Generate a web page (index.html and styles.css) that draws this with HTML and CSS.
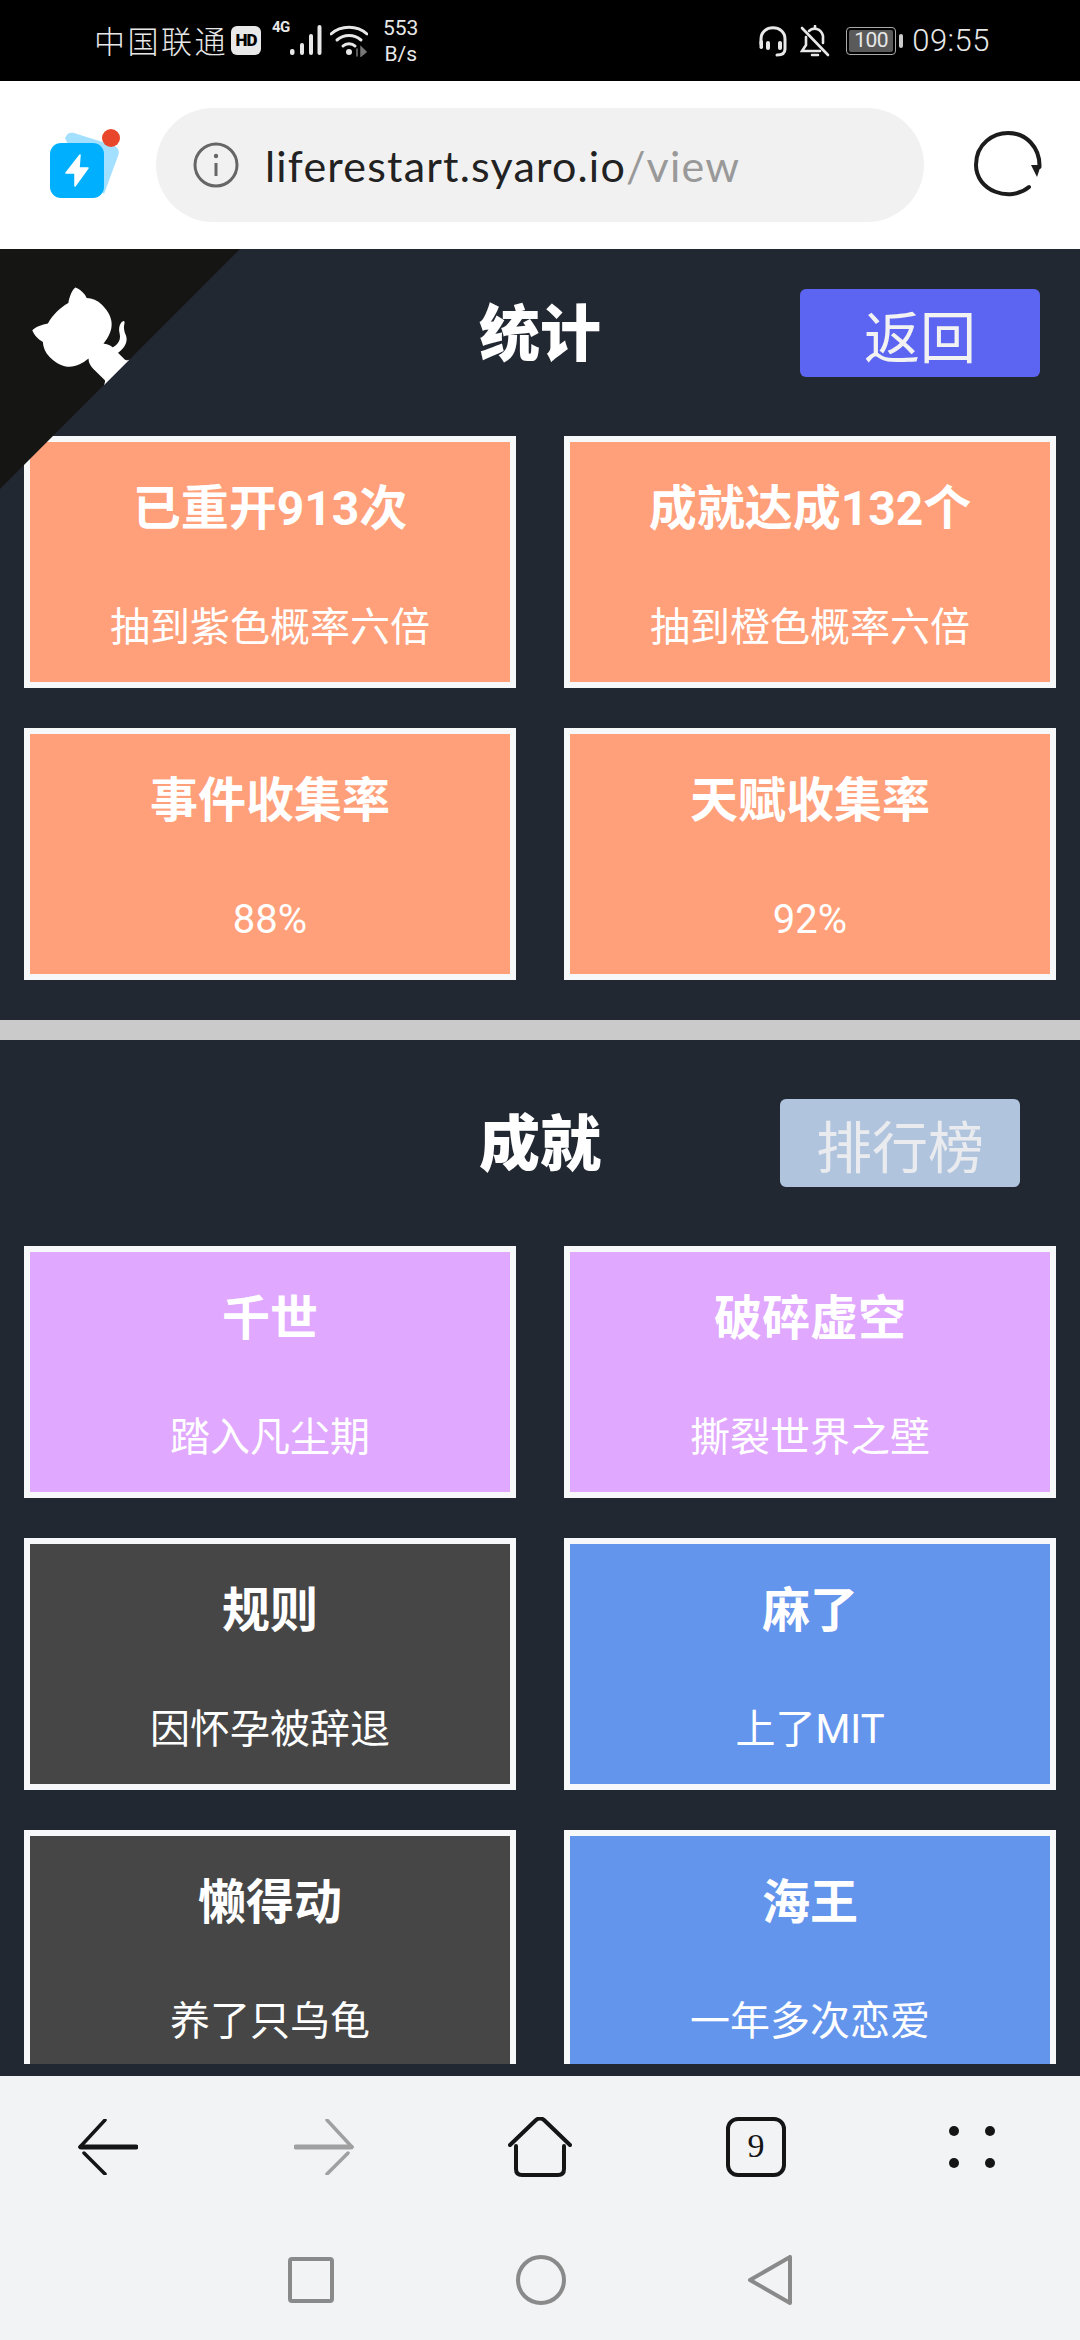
FILE: index.html
```html
<!DOCTYPE html>
<html lang="zh-CN">
<head>
    <meta charset="UTF-8">
    <meta name="viewport" content="width=device-width, initial-scale=1.0">
    <title>统计</title>
    <link rel="stylesheet" href="styles.css">
</head>
<body>
    <div class="phone">
        <div class="status-bar">
            <span class="carrier">中国联通</span>
            <span class="hd-badge">HD</span>
            <span class="net-type">4G</span>
            <svg class="signal" width="32" height="30" viewBox="0 0 32 30" fill="#e8e8e8">
                <rect x="0" y="24" width="4.500" height="6" rx="2"/>
                <rect x="10" y="18" width="4" height="12" rx="2"/>
                <rect x="19" y="9" width="4" height="21" rx="2"/>
                <rect x="27.500" y="0" width="4" height="30" rx="2"/>
            </svg>
            <svg class="wifi" width="38" height="32" viewBox="0 0 38 32" fill="none" stroke="#e8e8e8" stroke-width="3" stroke-linecap="round">
                <path d="M1 9 C11 0 27 0 37 9"/>
                <path d="M7 15 C14 9 24 9 31 15"/>
                <path d="M13 21 C16 18 22 18 25 21"/>
                <circle cx="19" cy="27" r="3" fill="#e8e8e8" stroke="none"/>
                <path d="M27 24 v7 M31 22 l5 5 l-5 4 z" stroke-width="1.5" stroke="#777" fill="#777"/>
            </svg>
            <div class="net-speed"><span>553</span><span>B/s</span></div>
            <div class="status-right">
                <svg width="30" height="32" viewBox="0 0 30 32" fill="none" stroke="#e8e8e8" stroke-width="3" stroke-linecap="round">
                    <path d="M3 19 V14 C3 -1 27 -1 27 14 V24 C27 28 24 30 19 30"/>
                    <rect x="1.5" y="15" width="3.5" height="9" rx="1.7" fill="#e8e8e8" stroke="none"/>
                    <rect x="8" y="16" width="4" height="9" rx="2" fill="#e8e8e8" stroke="none"/>
                    <rect x="20" y="16" width="4" height="9" rx="2" fill="#e8e8e8" stroke="none"/>
                </svg>
                <svg class="bell" width="30" height="32" viewBox="0 0 30 32" fill="none" stroke="#e8e8e8" stroke-width="2.6" stroke-linecap="round">
                    <path d="M6 12 V20 L2 26 H20"/>
                    <path d="M9 6 C13 2 21 3 23 11 V18"/>
                    <path d="M15 3 V1 M12 30 H18"/>
                    <path d="M2 3 L28 30"/>
                </svg>
                <div class="battery"><span class="battery-level">100</span></div>
                <span class="battery-nub"></span>
                <span class="clock">09:55</span>
            </div>
        </div>

        <div class="toolbar">
            <svg class="app-logo" width="62" height="66" viewBox="0 0 62 66">
                <path d="M15 6 C17 1 20 0 24 1 L62 13 C68 15 70 18 68 24 L54 62 L30 40 Z" fill="#a3e0ff"/>
                <rect x="0" y="11" width="54" height="55" rx="11" fill="#00b0ff"/>
                <path d="M30 23 L16 41 H25 L25 54 L38 36 H29 Z" fill="#fff" stroke="#fff" stroke-width="1.500" stroke-linejoin="round"/>
                <circle cx="61" cy="6" r="9" fill="#e8472b"/>
            </svg>
            <div class="address-bar">
                <svg width="46" height="46" viewBox="0 0 46 46" fill="none" stroke="#666" stroke-width="3">
                    <circle cx="23" cy="23" r="21"/>
                    <path d="M23 21 V34"/>
                    <circle cx="23" cy="14" r="2.2" fill="#666" stroke="none"/>
                </svg>
                <span class="url">liferestart.syaro.io<span class="url-path">/view</span></span>
            </div>
            <svg class="reload" width="68" height="68" viewBox="0 0 68 68" fill="none" stroke="#1c1c1c" stroke-width="4" stroke-linecap="round">
                <path d="M55 56 C36 72 2 60 2 34 C2 12 20 2 34 2 C52 2 66 16 65.500 36"/>
                <path d="M57 34 H67 L63 46 Z" fill="#1c1c1c" stroke="none"/>
            </svg>
        </div>

        <div class="main">
            <a class="github-corner">
                <svg width="240" height="240" viewBox="0 0 250 250">
                    <path d="M0,0 L115,115 L130,115 L142,142 L250,250 L250,0 Z" fill="#151513"/>
                    <path d="M128.3,109.0 C113.8,99.7 119.0,89.6 119.0,89.6 C122.0,82.7 120.5,78.6 120.5,78.6 C119.2,72.0 123.4,76.3 123.4,76.3 C127.3,80.9 125.5,87.3 125.5,87.3 C122.9,97.6 130.6,101.9 134.4,103.2" fill="#fff"/>
                    <path d="M115.0,115.0 C114.9,115.1 118.7,116.5 119.8,115.4 L133.7,101.6 C136.9,99.2 139.9,98.4 142.2,98.6 C133.8,88.0 127.5,74.4 143.8,58.0 C148.5,53.4 154.0,51.2 159.7,51.0 C160.3,49.4 163.2,43.6 171.4,40.1 C171.4,40.1 176.1,42.5 178.8,56.2 C183.1,58.6 187.2,61.8 190.9,65.4 C194.5,69.0 197.7,73.2 200.1,77.6 C213.8,80.2 216.3,84.9 216.3,84.9 C212.7,93.1 206.9,96.0 205.4,96.6 C205.1,102.4 203.0,107.8 198.3,112.5 C181.9,128.9 168.3,122.5 157.7,114.1 C157.9,116.9 156.7,120.9 152.7,124.9 L141.0,136.5 C139.8,137.7 141.6,141.9 141.8,141.8 Z" fill="#fff"/>
                </svg>
            </a>
            <div class="scroller">
                <section class="section section-stats">
                    <div class="section-head">
                        <h1>统计</h1>
                        <button class="btn btn-back">返回</button>
                    </div>
                    <div class="cards">
                        <div class="card orange"><h2>已重开913次</h2><p>抽到紫色概率六倍</p></div>
                        <div class="card orange"><h2>成就达成132个</h2><p>抽到橙色概率六倍</p></div>
                        <div class="card orange"><h2>事件收集率</h2><p>88%</p></div>
                        <div class="card orange"><h2>天赋收集率</h2><p>92%</p></div>
                    </div>
                </section>
                <div class="divider"></div>
                <section class="section section-achieve">
                    <div class="section-head">
                        <h1>成就</h1>
                        <button class="btn btn-rank">排行榜</button>
                    </div>
                    <div class="cards">
                        <div class="card purple"><h2>千世</h2><p>踏入凡尘期</p></div>
                        <div class="card purple"><h2>破碎虚空</h2><p>撕裂世界之壁</p></div>
                        <div class="card grey"><h2>规则</h2><p>因怀孕被辞退</p></div>
                        <div class="card blue"><h2>麻了</h2><p>上了MIT</p></div>
                        <div class="card grey"><h2>懒得动</h2><p>养了只乌龟</p></div>
                        <div class="card blue"><h2>海王</h2><p>一年多次恋爱</p></div>
                    </div>
                </section>
            </div>
        </div>

        <div class="bottom-nav">
            <div class="browser-nav">
                <svg width="60" height="56" viewBox="0 0 60 56" fill="none" stroke="#151515" stroke-linecap="round">
                    <path d="M27 1 L2 28" stroke-width="3.500"/>
                    <path d="M3 28 H58" stroke-width="5"/>
                    <path d="M6 34 L27 55" stroke-width="3.500"/>
                </svg>
                <svg width="60" height="56" viewBox="0 0 60 56" fill="none" stroke="#a0a0a0" stroke-linecap="round">
                    <path d="M33 1 L58 28" stroke-width="3.500"/>
                    <path d="M2 28 H57" stroke-width="5"/>
                    <path d="M54 34 L33 55" stroke-width="3.500"/>
                </svg>
                <svg width="64" height="60" viewBox="0 0 64 60" fill="none" stroke="#151515" stroke-width="4" stroke-linecap="round" stroke-linejoin="round">
                    <path d="M2 28 L28 3 C30 1 34 1 36 3 L62 28"/>
                    <path d="M8 29 V52 C8 56 10 58 14 58 H50 C54 58 56 56 56 52 V29"/>
                </svg>
                <div class="tab-count">9</div>
                <svg width="46" height="44" viewBox="0 0 46 44" fill="#151515">
                    <circle cx="5" cy="6" r="5"/>
                    <circle cx="41" cy="6" r="5"/>
                    <circle cx="5" cy="38" r="5"/>
                    <circle cx="41" cy="38" r="5"/>
                </svg>
            </div>
            <div class="system-nav">
                <svg width="46" height="46" viewBox="0 0 46 46" fill="none" stroke="#8a8a8a" stroke-width="4" stroke-linejoin="round">
                    <rect x="2" y="2" width="42" height="42" rx="2"/>
                </svg>
                <svg width="50" height="50" viewBox="0 0 50 50" fill="none" stroke="#8a8a8a" stroke-width="4">
                    <circle cx="25" cy="25" r="23"/>
                </svg>
                <svg width="44" height="50" viewBox="0 0 44 50" fill="none" stroke="#8a8a8a" stroke-width="4" stroke-linejoin="round">
                    <path d="M42 2 V48 L2 25 Z"/>
                </svg>
            </div>
        </div>
    </div>
</body>
</html>
```
FILE: styles.css
```css
* {
    box-sizing: border-box;
}
html, body {
    margin: 0;
    padding: 0;
}
body {
    font-family: Roboto, "Noto Sans CJK SC", sans-serif;
    background: #222831;
}
.phone {
    width: 1080px;
    height: 2340px;
    display: flex;
    flex-direction: column;
    overflow: hidden;
}

/* Status bar */
.status-bar {
    height: 81px;
    flex: none;
    background: #000000;
    color: #e8e8e8;
    display: flex;
    align-items: center;
    padding-left: 94px;
}
.carrier {
    font-family: "Noto Sans CJK SC", sans-serif;
    font-weight: 300;
    font-size: 31px;
    letter-spacing: 2.500px;
    margin-top: -3px;
}
.hd-badge {
    width: 30px;
    height: 29px;
    margin-left: 3px;
    margin-top: -1px;
    border-radius: 6px;
    background: #e8e8e8;
    color: #000000;
    font-size: 17px;
    font-weight: 900;
    line-height: 29px;
    text-align: center;
    letter-spacing: -1px;
}
.net-type {
    font-size: 15px;
    font-weight: 700;
    width: 18px;
    margin-left: 11px;
    margin-top: -27px;
    letter-spacing: -0.5px;
}
.signal {
    margin-top: -1px;
}
.wifi {
    margin-left: 8px;
}
.net-speed {
    display: flex;
    flex-direction: column;
    align-items: center;
    margin-left: 15px;
    font-size: 21px;
    line-height: 26px;
    margin-top: 1px;
}
.status-right {
    margin-left: auto;
    padding-right: 90px;
    display: flex;
    align-items: center;
}
.bell {
    margin-left: 12px;
}
.battery {
    width: 50px;
    height: 28px;
    margin-left: 16px;
    border: 1.500px solid #aaaaaa;
    border-radius: 4px;
    padding: 2px;
}
.battery-level {
    display: block;
    height: 100%;
    border-radius: 2px;
    background: #5a5a5a;
    color: #e8e8e8;
    font-size: 21px;
    line-height: 21px;
    text-align: center;
    letter-spacing: -0.5px;
}
.battery-nub {
    width: 4px;
    height: 14px;
    margin-left: 3px;
    border-radius: 2px;
    background: #cccccc;
}
.clock {
    margin-left: 9px;
    font-size: 31px;
    font-weight: 300;
    letter-spacing: 0.5px;
}

/* Browser toolbar */
.toolbar {
    height: 168px;
    flex: none;
    background: #ffffff;
    display: flex;
    align-items: center;
    padding-left: 50px;
}
.app-logo {
    flex: none;
    overflow: visible;
}
.address-bar {
    width: 768px;
    height: 114px;
    margin-left: 44px;
    border-radius: 57px;
    background: #f1f1f1;
    display: flex;
    align-items: center;
    gap: 26px;
    padding-left: 37px;
}
.url {
    font-family: Lato, sans-serif;
    font-size: 43px;
    color: #222222;
    letter-spacing: 1.200px;
}
.url-path {
    color: #999999;
}
.reload {
    margin-left: 50px;
}

/* Main page */
.main {
    position: relative;
    flex: 1;
    min-height: 0;
    background: #222831;
    padding-bottom: 12px;
}
.github-corner {
    position: absolute;
    top: 0;
    left: 0;
    z-index: 2;
    line-height: 0;
}
.github-corner svg {
    transform: scaleX(-1);
}
.scroller {
    height: 100%;
    overflow: hidden;
}
.section {
    padding-bottom: 40px;
}
.section-stats {
    padding-top: 40px;
}
.section-achieve {
    padding-top: 59px;
}
.section-head {
    display: grid;
    grid-template-columns: 1fr auto 1fr;
    align-items: center;
    height: 88px;
    margin-bottom: 59px;
}
.section-head h1 {
    grid-column: 2;
    margin: 0;
    padding-top: 4px;
    font-size: 61px;
    line-height: 70px;
    font-weight: 900;
    color: #ffffff;
}
.btn {
    grid-column: 3;
    justify-self: end;
    width: 240px;
    height: 88px;
    border: none;
    border-radius: 6px;
    font-family: inherit;
    font-size: 56px;
    padding: 0;
}
.btn-back {
    margin-right: 40px;
    background: #5c64f2;
    color: #f2f2f2;
}
.btn-rank {
    margin-right: 60px;
    background: #b0c4de;
    color: #e9ebef;
}
.divider {
    height: 20px;
    background: #cacaca;
}
.cards {
    display: grid;
    grid-template-columns: 492px 492px;
    gap: 40px 48px;
    padding: 0 24px;
}
.card {
    height: 252px;
    border: 6px solid #f7f8f9;
    padding-top: 37px;
    text-align: center;
    color: #ffffff;
}
.card h2 {
    margin: 0;
    font-size: 48px;
    line-height: 60px;
    font-weight: 700;
}
.card p {
    margin: 64px 0 0;
    font-size: 40px;
    line-height: 50px;
}
.orange {
    background: #ffa07a;
}
.purple {
    background: #e0a8fe;
}
.grey {
    background: #464646;
}
.blue {
    background: #6495ed;
}

/* Bottom navigation */
.bottom-nav {
    height: 264px;
    flex: none;
    background: #f1f3f5;
    padding-top: 41px;
}
.browser-nav {
    display: grid;
    grid-template-columns: repeat(5, 216px);
    justify-items: center;
    align-items: center;
    height: 60px;
}
.tab-count {
    width: 60px;
    height: 60px;
    border: 4px solid #151515;
    border-radius: 12px;
    font-family: "Liberation Serif", serif;
    font-size: 34px;
    line-height: 50px;
    text-align: center;
    color: #151515;
}
.system-nav {
    display: flex;
    justify-content: center;
    align-items: center;
    gap: 182px;
    margin-top: 78px;
}
```
